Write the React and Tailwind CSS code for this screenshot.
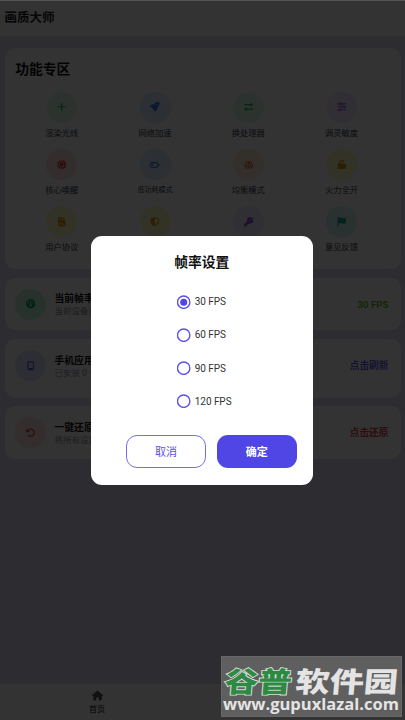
import React from "react";
import {
  FaPlus, FaRocket, FaSliders, FaMicrochip, FaScaleBalanced,
  FaUnlock, FaFileContract, FaShieldHalved, FaKey, FaFlag, FaGauge, FaRotateLeft, FaHouse,
} from "react-icons/fa6";

function Swap(props) {
  return (
    <svg viewBox="0 0 10 10" fill="none" stroke="currentColor" strokeWidth="1.3" {...props}>
      <path d="M0.5 2.8H8M9.5 7.4H2" />
      <path d="M7 .5L10 2.8 7 5.1zM3 5.1L0 7.4l3 2.3z" fill="currentColor" stroke="none" />
    </svg>
  );
}

function Battery(props) {
  return (
    <svg viewBox="0 0 11 11" fill="none" stroke="currentColor" strokeWidth="1.3" {...props}>
      <rect x="0.8" y="3" width="8.2" height="5.4" rx="1.2" />
      <path d="M10.3 4.6v2.2M2.9 4.6v2.2" />
    </svg>
  );
}

function Phone(props) {
  return (
    <svg viewBox="0 0 10 12" fill="none" stroke="currentColor" strokeWidth="1.5" {...props}>
      <rect x="1.5" y="1.2" width="7" height="9.6" rx="1" />
      <path d="M3 9.7h4" />
    </svg>
  );
}

const features = [
  ["渲染光线", FaPlus, "bg-[#dcfce7] text-[#22b455]"],
  ["网络加速", FaRocket, "bg-[#dbeafe] text-[#3b76f2]"],
  ["换处理器", Swap, "bg-[#dcfce7] text-[#22b455]"],
  ["调灵敏度", FaSliders, "bg-[#f3e8ff] text-[#a050ee]"],
  ["核心唤醒", FaMicrochip, "bg-[#fee2e2] text-[#ea3c3c]"],
  ["低功耗模式", Battery, "bg-[#dbeafe] text-[#3b76f2]"],
  ["均衡模式", FaScaleBalanced, "bg-[#ffedd5] text-[#f2681c]"],
  ["火力全开", FaUnlock, "bg-[#fef9c3] text-[#d99a08]"],
  ["用户协议", FaFileContract, "bg-[#fef9c3] text-[#d99a08]"],
  ["账号安全", FaShieldHalved, "bg-[#fef9c3] text-[#d99a08]"],
  ["获取密钥", FaKey, "bg-[#f0e9fe] text-[#8b4cf0]"],
  ["意见反馈", FaFlag, "bg-[#ccfbf1] text-[#12a496]"],
];

const rows = [
  ["当前帧率", "当前设备运行帧率", "30 FPS", FaGauge, "h-[52.5px]", "bg-[#c8f8e0] text-[#0aa574]", "text-[#6fae1c]"],
  ["手机应用", "已安装 0 个应用", "点击刷新", Phone, "h-[58.5px] pb-[5px]", "bg-[#e0e7ff] text-[#6058ee]", "text-[#6a62f0]"],
  ["一键还原", "将所有设置还原", "点击还原", FaRotateLeft, "h-[52.5px]", "bg-[#fee2e2] text-[#ea4444]", "text-[#e24444]"],
];

const options = ["30 FPS", "60 FPS", "90 FPS", "120 FPS"];

function Dialog() {
  return (
    <div className="absolute left-[90.5px] top-[235.5px] flex h-[249.5px] w-[222.5px] flex-col items-center rounded-[11px] bg-white pt-[16px]">
      <h2 className="text-[13.8px] font-bold leading-[20px] text-[#111]">帧率设置</h2>
      <div className="mt-[23px] flex w-[50px] flex-col gap-[19.3px]">
        {options.map((o, i) => (
          <label key={o} className="flex h-[14px] items-center gap-[4px] whitespace-nowrap text-[10px] leading-[14px] tracking-[-0.05px] text-[#333]">
            <svg className="size-[14px] shrink-0 text-[#5b52e8]" viewBox="0 0 14 14">
              <circle cx="6.7" cy="7.2" r="6.2" fill="none" stroke="currentColor" strokeWidth="1.4" />
              {i === 0 && <circle cx="6.7" cy="7.2" r="3.5" fill="#4f46e5" />}
            </svg>
            <span className="pt-[1px]">{o}</span>
          </label>
        ))}
      </div>
      <div className="mt-[26.6px] flex gap-[11px] self-end pr-[16.5px] text-[11px]">
        <button className="h-[33.5px] w-[80px] rounded-[11px] border border-[#766ff0] pt-[1px] leading-none text-[#5b52e8]">取消</button>
        <button className="h-[33.5px] w-[79.5px] rounded-[11px] bg-[#4f46e5] pt-[1px] font-bold leading-none text-white">确定</button>
      </div>
    </div>
  );
}

function Watermark() {
  return (
    <div className="absolute left-[221px] top-[656px] h-[61px] w-[181px] border border-[#676767] bg-[#5f5f5f]">
      <svg className="block h-full w-full" viewBox="0 0 179 59" fontFamily="'Noto Sans CJK SC', sans-serif" fontWeight="900">
        <g transform="translate(2 34.5) skewX(-5)">
          <text fontSize="28" transform="scale(1.2 1)" fill="#2c8a43" stroke="#d8ddd9" strokeWidth="1.8" paintOrder="stroke">谷普</text>
          <text x="58" fontSize="28" transform="scale(1.22 1)" fill="#e4e4e4">软件园</text>
        </g>
        <text x="1" y="53.3" fontFamily="'Open Sans', sans-serif" fontWeight="700" fontSize="16.5" textLength="176" lengthAdjust="spacingAndGlyphs" fill="#e4e4e4">www.gupuxlazal.com</text>
      </svg>
    </div>
  );
}

export default function App() {
  return (
    <div className="relative flex h-[720px] w-[405px] flex-col overflow-hidden bg-[#e0dbf0] font-[Roboto,'Noto_Sans_CJK_SC',sans-serif]">
      <header className="flex h-[36px] shrink-0 items-center bg-white pl-[4.5px] text-[12.5px] font-bold leading-none text-[#222]">
        画质大师
      </header>
      <main className="flex flex-1 flex-col gap-[8.7px] px-[4.5px] pt-[11.5px]">
        <section className="h-[221.7px] rounded-[11px] bg-white px-[10.7px] pt-[11px]">
          <h1 className="text-[13.8px] font-bold leading-[20px] text-[#111]">功能专区</h1>
          <div className="mt-[13px] grid w-[373px] grid-cols-4 gap-y-[11.4px]">
            {features.map(([name, Icon, tone]) => (
              <div key={name} className="flex h-[46px] flex-col items-center">
                <span className={"flex size-[31px] shrink-0 items-center justify-center rounded-full " + tone}>
                  <Icon className="size-[9.5px]" />
                </span>
                <span className={"mt-[4px] whitespace-nowrap leading-[12px] text-[#374151] " + (name.length > 4 ? "text-[7px]" : "text-[8.3px]")}>{name}</span>
              </div>
            ))}
          </div>
        </section>
        {rows.map(([title, sub, action, Icon, box, tone, link]) => (
          <section key={title} className={"flex shrink-0 items-center rounded-[11px] bg-white pl-[10.5px] pr-[12px] " + box}>
            <span className={"flex size-[31px] items-center justify-center rounded-full " + tone}>
              <Icon className="size-[9.5px]" />
            </span>
            <div className="ml-[8.5px] flex-1 pt-[2px]">
              <div className="text-[9.8px] font-bold leading-[12px] text-[#111]">{title}</div>
              <div className="text-[8.5px] leading-[12px] text-[#8b909a]">{sub}</div>
            </div>
            <span className={"pt-[1.5px] text-[9.7px] font-bold " + link}>{action}</span>
          </section>
        ))}
      </main>
      <nav className="flex h-[36px] shrink-0 bg-white text-[8px] leading-[10px]">
        <div className="flex w-[194px] flex-col items-center pt-[6px] text-[#4b5563]">
          <FaHouse className="size-[11px]" />
          <span className="mt-[4px] font-medium">首页</span>
        </div>
        <div className="flex-1" />
      </nav>
      <div className="absolute inset-0 border-t border-[#555] bg-black/80" />
      <Dialog />
      <Watermark />
    </div>
  );
}
